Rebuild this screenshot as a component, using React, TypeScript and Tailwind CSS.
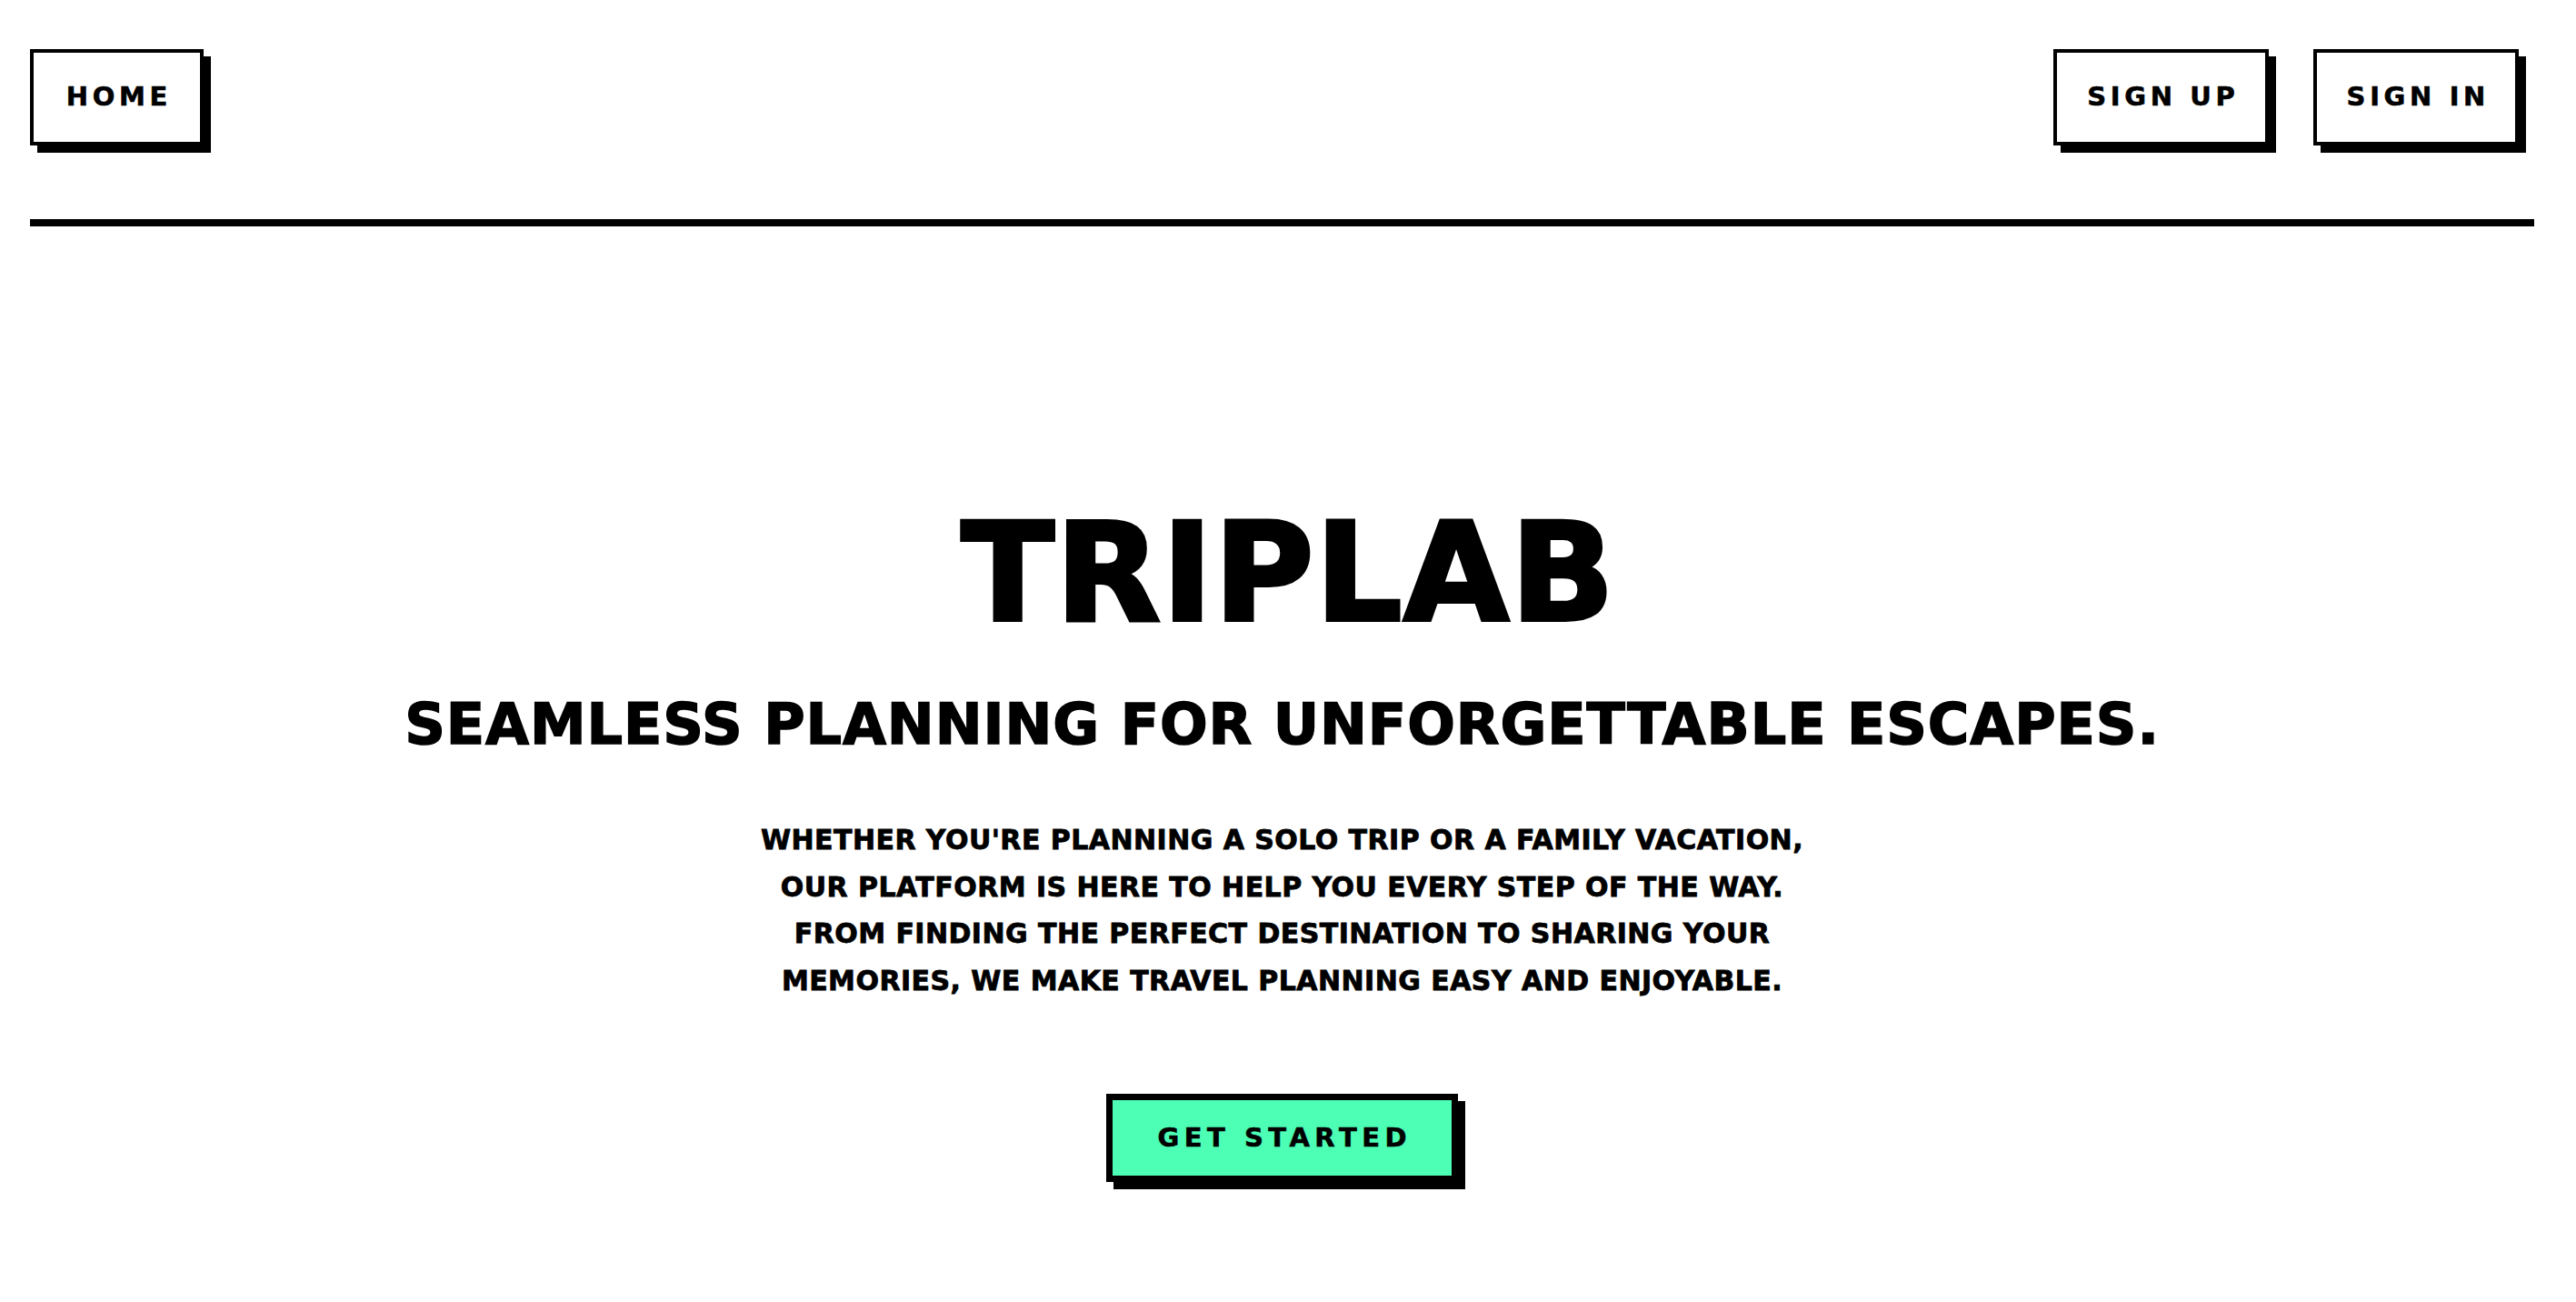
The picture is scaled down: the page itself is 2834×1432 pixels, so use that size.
import React from 'react';

// Chunky outlined button with a hard offset shadow
function NavButton({ label, width }: { label: string; width: string }) {
  return (
    <button
      className={`${width} h-[106px] flex items-center justify-center border-4 border-black bg-white shadow-[8px_8px_0_0_#000] text-[29px] font-bold tracking-[0.16em] text-black [-webkit-text-stroke:0.6px_#000]`}
    >
      <span className="pl-[0.16em]">{label}</span>
    </button>
  );
}

export default function App() {
  return (
    <div className="min-h-screen bg-white pr-[13px] font-['DejaVu_Sans',sans-serif] text-black">
      {/* Header */}
      <header className="px-[33px] pt-[54px]">
        <nav className="flex items-start justify-between pr-[17px]">
          <NavButton label="HOME" width="w-[191px]" />
          <div className="flex gap-[49px]">
            <NavButton label="SIGN UP" width="w-[237px]" />
            <NavButton label="SIGN IN" width="w-[226px]" />
          </div>
        </nav>
        <div className="mt-[81px] h-[8px] bg-black" />
      </header>

      {/* Hero */}
      <main className="flex flex-col items-center text-center">
        <h1 className="mt-[306px] pl-[14px] text-[150px] leading-none font-bold tracking-[0.01em] [-webkit-text-stroke:4px_#000]">
          TRIPLAB
        </h1>
        <h2 className="mt-[61px] text-[62px] leading-none font-bold tracking-[0.015em] [-webkit-text-stroke:1.5px_#000]">
          SEAMLESS PLANNING FOR UNFORGETTABLE ESCAPES.
        </h2>
        <p className="mt-[70px] text-[30px] leading-[51.5px] font-bold tracking-[0.015em] [-webkit-text-stroke:0.8px_#000]">
          WHETHER YOU'RE PLANNING A SOLO TRIP OR A FAMILY VACATION,
          <br />
          OUR PLATFORM IS HERE TO HELP YOU EVERY STEP OF THE WAY.
          <br />
          FROM FINDING THE PERFECT DESTINATION TO SHARING YOUR
          <br />
          MEMORIES, WE MAKE TRAVEL PLANNING EASY AND ENJOYABLE.
        </p>
        <button className="mt-[99px] w-[387px] h-[97px] flex items-center justify-center border-[7px] border-black bg-[#4dffb5] shadow-[8px_8px_0_0_#000] text-[29px] font-bold tracking-[0.19em] [-webkit-text-stroke:0.6px_#000]">
          <span className="pl-[0.19em]">GET STARTED</span>
        </button>
      </main>
    </div>
  );
}
